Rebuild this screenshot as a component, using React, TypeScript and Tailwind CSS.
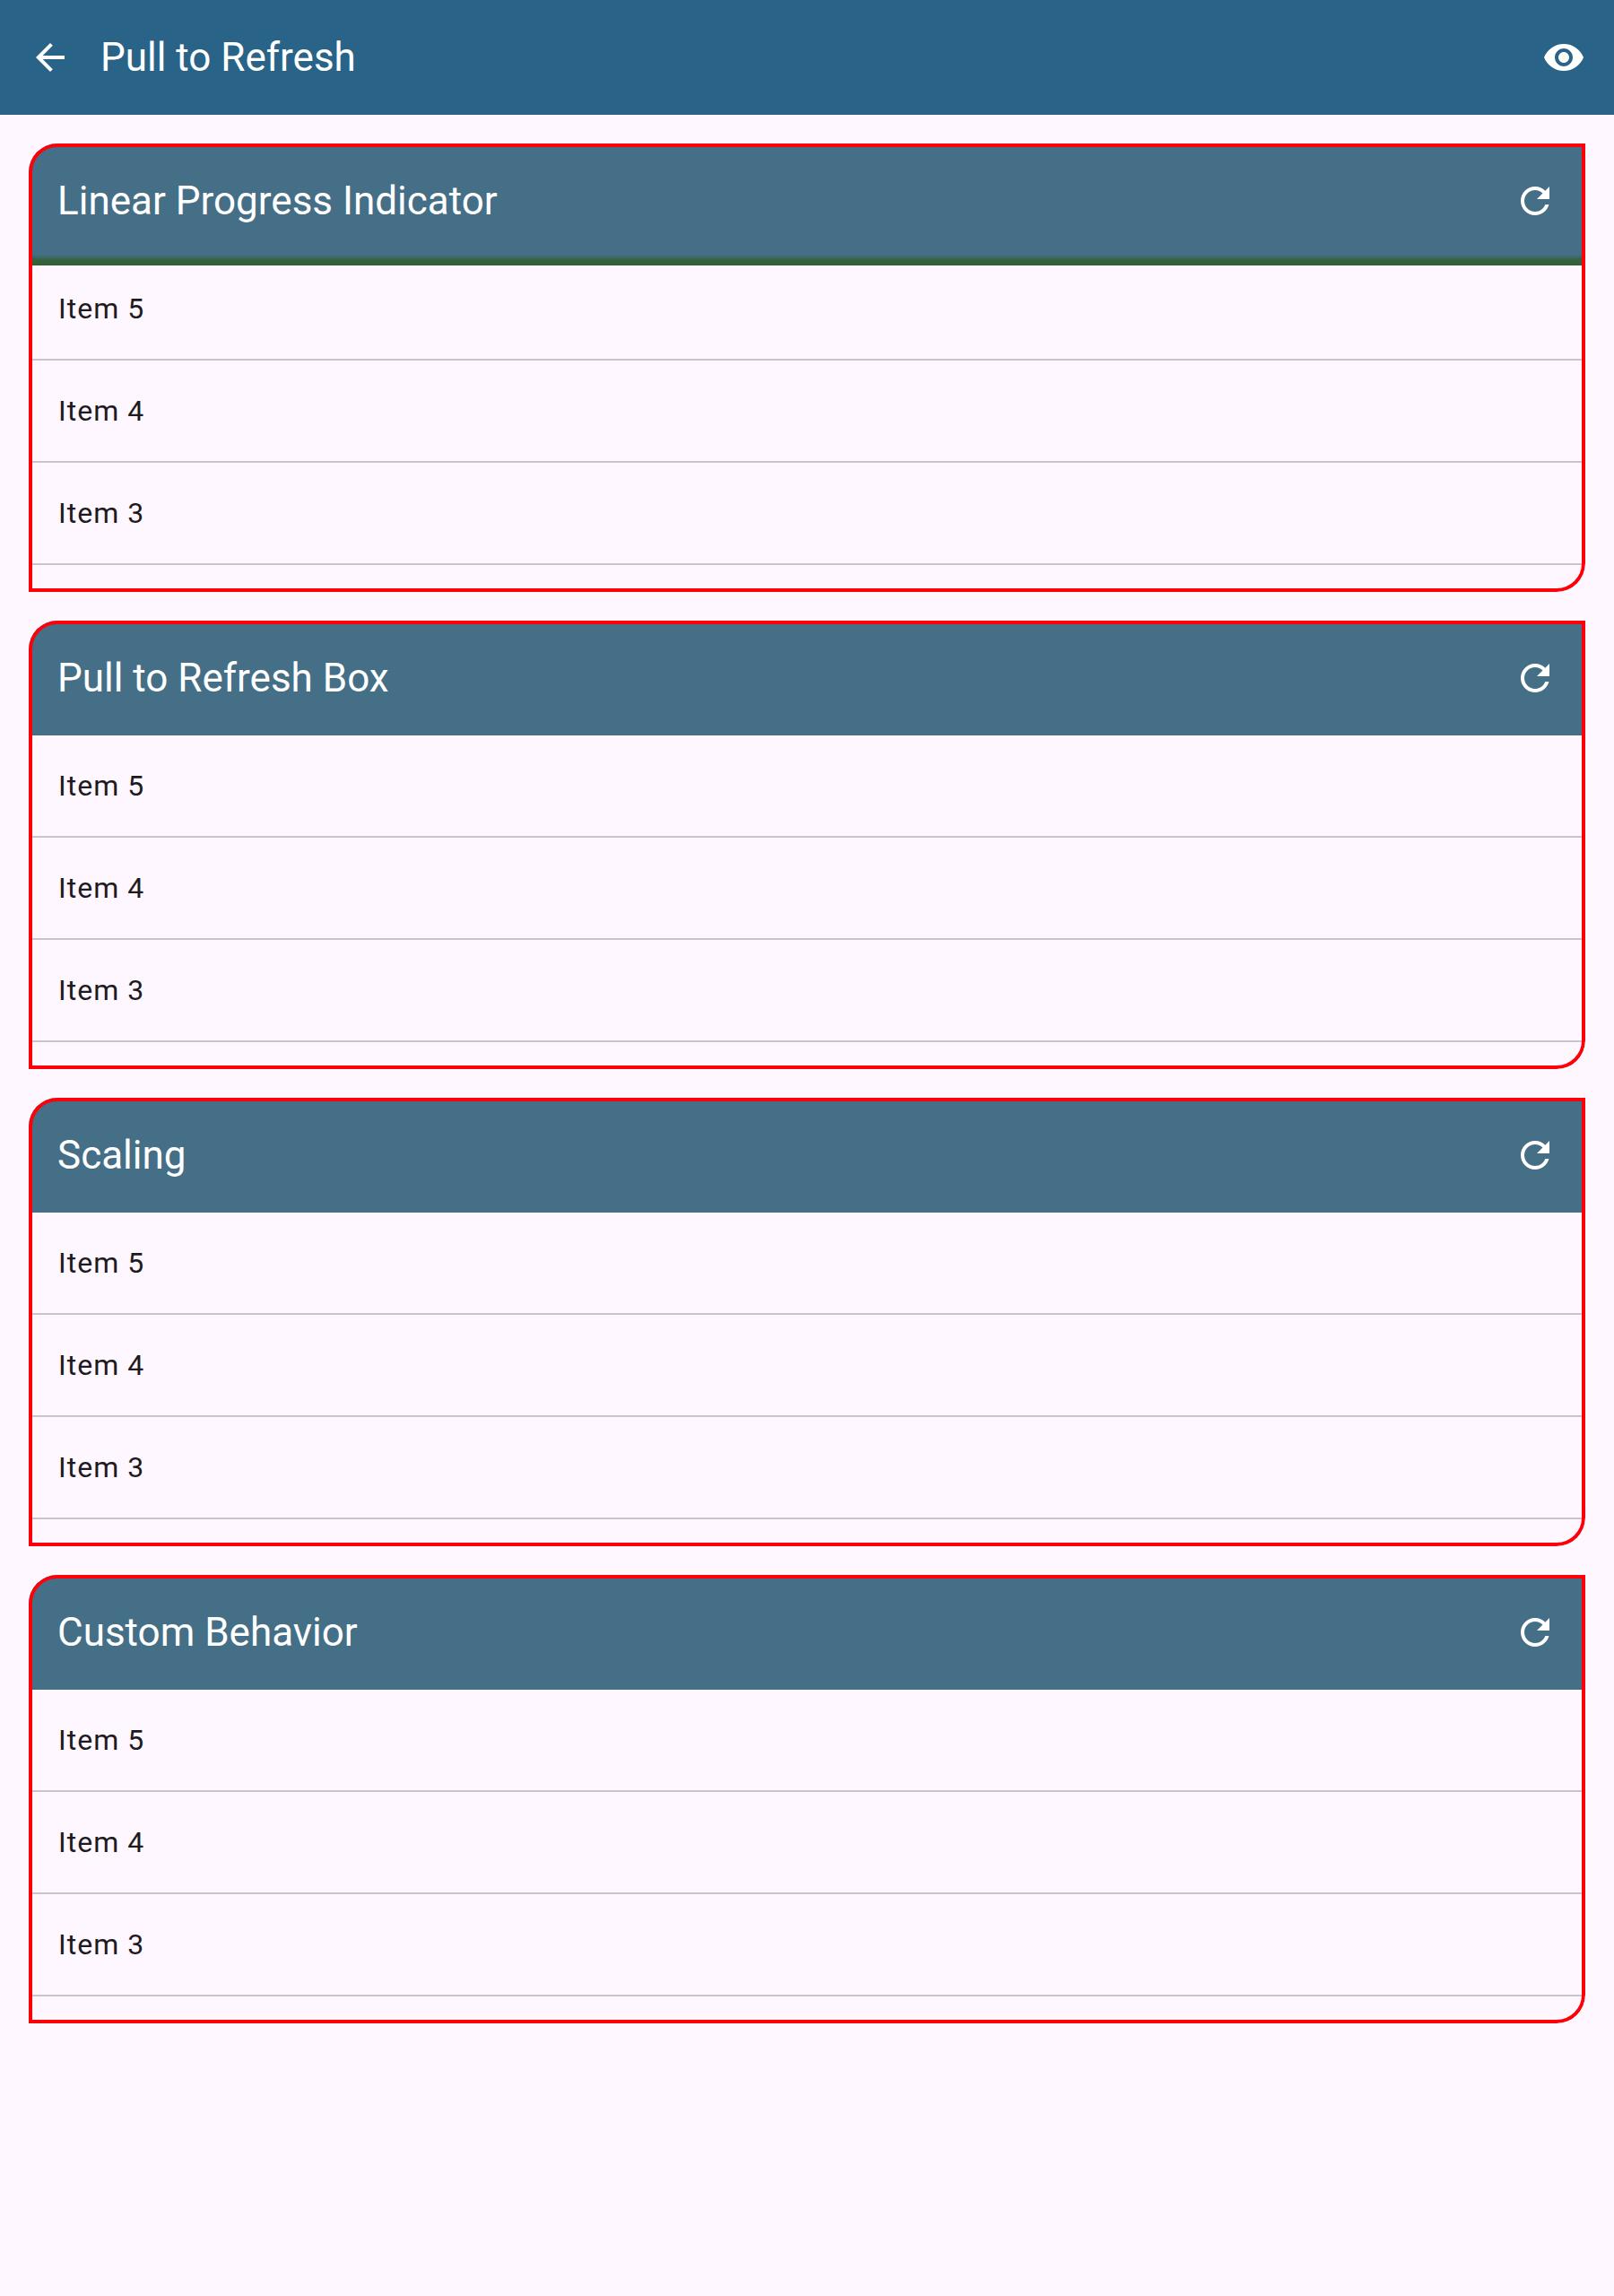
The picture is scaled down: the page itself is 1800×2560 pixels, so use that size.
import React from "react";

const ICONS = {
  back: "M20 11H7.83l5.59-5.59L12 4l-8 8 8 8 1.41-1.41L7.83 13H20v-2z",
  eye: "M12 4.5C7 4.5 2.73 7.61 1 12c1.73 4.39 6 7.5 11 7.5s9.27-3.11 11-7.5c-1.73-4.39-6-7.5-11-7.5zM12 17c-2.76 0-5-2.24-5-5s2.24-5 5-5 5 2.24 5 5-2.24 5-5 5zm0-8c-1.66 0-3 1.34-3 3s1.34 3 3 3 3-1.34 3-3-1.34-3-3-3z",
  refresh:
    "M17.65 6.35C16.2 4.9 14.21 4 12 4c-4.42 0-7.99 3.58-7.99 8s3.57 8 7.99 8c3.73 0 6.84-2.55 7.73-6h-2.08c-.82 2.33-3.04 4-5.65 4-3.31 0-6-2.69-6-6s2.69-6 6-6c1.66 0 3.14.69 4.22 1.78L13 11h7V4l-2.35 2.35z",
};

function IconButton({ icon, label }: { icon: keyof typeof ICONS; label: string }) {
  return (
    <button aria-label={label} className="shrink-0 text-white">
      <svg viewBox="0 0 24 24" className="size-12" fill="currentColor">
        <path d={ICONS[icon]} />
      </svg>
    </button>
  );
}

const ITEMS = ["Item 5", "Item 4", "Item 3"];

function Section({ title, progress = false }: { title: string; progress?: boolean }) {
  return (
    <section className="relative h-[500px] overflow-hidden rounded-tl-[32px] rounded-br-[32px]">
      <header className="flex h-32 items-center justify-between bg-[#456e87] px-8">
        <h2 className="text-[44px] leading-[56px] text-white">{title}</h2>
        <IconButton icon="refresh" label={`Refresh ${title}`} />
      </header>
      <ul>
        {ITEMS.map((item) => (
          <li
            key={item}
            className="flex h-[114px] items-center border-b-2 border-[#cac4d0] pr-8 pl-[33px] text-[32px] leading-[48px] tracking-[1px] text-[#1d1b20]"
          >
            {item}
          </li>
        ))}
      </ul>
      {progress && (
        <div className="absolute inset-x-0 top-[124px] h-3 bg-linear-to-b from-[#456e87] via-[#35623f] via-50% to-[#375f35]" />
      )}
      <div className="pointer-events-none absolute inset-0 rounded-tl-[32px] rounded-br-[32px] border-4 border-[#ff0008]" />
    </section>
  );
}

export default function App() {
  return (
    <div className="min-h-[2560px] bg-[#fef7ff] font-['Roboto',sans-serif]">
      <header className="flex h-32 items-center bg-[#296488] px-8">
        <IconButton icon="back" label="Back" />
        <h1 className="ml-8 flex-1 text-[44px] leading-[56px] text-white">Pull to Refresh</h1>
        <IconButton icon="eye" label="Toggle visibility" />
      </header>
      <main className="flex flex-col gap-8 p-8">
        <Section title="Linear Progress Indicator" progress />
        <Section title="Pull to Refresh Box" />
        <Section title="Scaling" />
        <Section title="Custom Behavior" />
      </main>
    </div>
  );
}
